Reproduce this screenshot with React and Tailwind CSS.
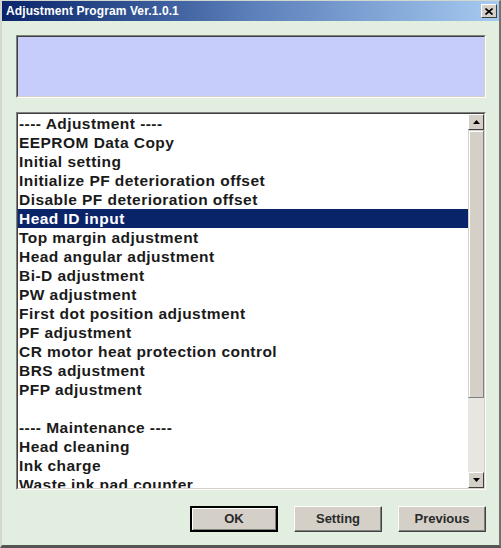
import React from "react";

const items = [
  "---- Adjustment ----",
  "EEPROM Data Copy",
  "Initial setting",
  "Initialize PF deterioration offset",
  "Disable PF deterioration offset",
  "Head ID input",
  "Top margin adjustment",
  "Head angular adjustment",
  "Bi-D adjustment",
  "PW adjustment",
  "First dot position adjustment",
  "PF adjustment",
  "CR motor heat protection control",
  "BRS adjustment",
  "PFP adjustment",
  "",
  "---- Maintenance ----",
  "Head cleaning",
  "Ink charge",
  "Waste ink pad counter",
];

function ArrowBtn({ up }) {
  return (
    <div className="w-[16px] h-[16px] bg-[#d4d0c8] border border-t-white border-l-white border-r-[#404040] border-b-[#404040] flex items-center justify-center shrink-0">
      <svg width="7" height="4" viewBox="0 0 7 4">
        {up ? <polygon points="3.5,0 7,4 0,4" fill="#000" /> : <polygon points="0,0 7,0 3.5,4" fill="#000" />}
      </svg>
    </div>
  );
}

function Btn({ label, def }) {
  return (
    <div
      className={
        "w-[88px] h-[26px] bg-[#d4d0c8] flex items-center justify-center text-[13px] font-bold text-[#2a2a2a] " +
        (def
          ? "border-2 border-black shadow-[inset_1px_1px_0_#fff,inset_-1px_-1px_0_#808080]"
          : "border border-t-white border-l-white border-r-[#404040] border-b-[#404040] shadow-[inset_-1px_-1px_0_#808080]")
      }
      style={{ fontFamily: '"Liberation Sans", Arial, sans-serif' }}
    >
      {label}
    </div>
  );
}

export default function App() {
  return (
    <div
      className="w-[501px] h-[548px] flex flex-col bg-[#e2efe0] border-l-2 border-t border-r-2 border-b-[3px] border-l-[#d4d7cf] border-t-[#d4d7cf] border-r-[#6f726e] border-b-[#555]"
      style={{ fontFamily: '"Liberation Sans", Arial, sans-serif' }}
    >
      {/* title bar */}
      <div className="h-[20px] flex items-center justify-between pl-[4px] pr-[2px] bg-gradient-to-r from-[#0a246a] via-[#5b7fb9] to-[#a6caf0]">
        <span className="text-white text-[12px] font-bold tracking-[0.1px]">Adjustment Program Ver.1.0.1</span>
        <div className="w-[16px] h-[14px] bg-[#d4d0c8] border border-t-white border-l-white border-r-[#404040] border-b-[#404040] flex items-center justify-center">
          <svg width="8" height="7" viewBox="0 0 8 7">
            <path d="M0.5 0.5 L7.5 6.5 M7.5 0.5 L0.5 6.5" stroke="#000" strokeWidth="1.6" />
          </svg>
        </div>
      </div>

      <div className="flex-1 flex flex-col pl-[14px] pr-[13px] pt-[14px]">
        {/* message panel */}
        <div className="h-[63px] bg-[#c6cdfb] border border-t-[#808080] border-l-[#808080] border-r-white border-b-white">
          <div className="h-full border border-t-[#404040] border-l-[#404040] border-r-[#d4d0c8] border-b-[#d4d0c8]" />
        </div>

        {/* list box */}
        <div className="mt-[14px] h-[378px] bg-white border border-t-[#808080] border-l-[#808080] border-r-white border-b-white">
          <div className="h-full flex border border-t-[#404040] border-l-[#404040] border-r-[#d4d0c8] border-b-[#d4d0c8] overflow-hidden">
            <div className="flex-1 flex flex-col overflow-hidden">
              {items.map((t, i) => (
                <div
                  key={i}
                  className={
                    "h-[19px] shrink-0 leading-[19px] pl-[1px] text-[15.5px] font-bold tracking-[0.45px] whitespace-nowrap " +
                    (t === "Head ID input" ? "bg-[#0a246a] text-white" : "text-[#1a1a1a]")
                  }
                >
                  {t}
                </div>
              ))}
            </div>
            {/* scrollbar */}
            <div className="w-[16px] flex flex-col">
              <ArrowBtn up />
              <div className="h-[268px] bg-[#d4d0c8] border border-t-[#d4d0c8] border-l-[#d4d0c8] border-r-[#808080] border-b-[#808080] shadow-[inset_1px_1px_0_#fff]" />
              <div className="flex-1 bg-[#e8e6e0]" />
              <ArrowBtn />
            </div>
          </div>
        </div>

        {/* buttons */}
        <div className="mt-[16px] flex justify-end gap-[16px]">
          <Btn label="OK" def />
          <Btn label="Setting" />
          <Btn label="Previous" />
        </div>
      </div>
    </div>
  );
}
